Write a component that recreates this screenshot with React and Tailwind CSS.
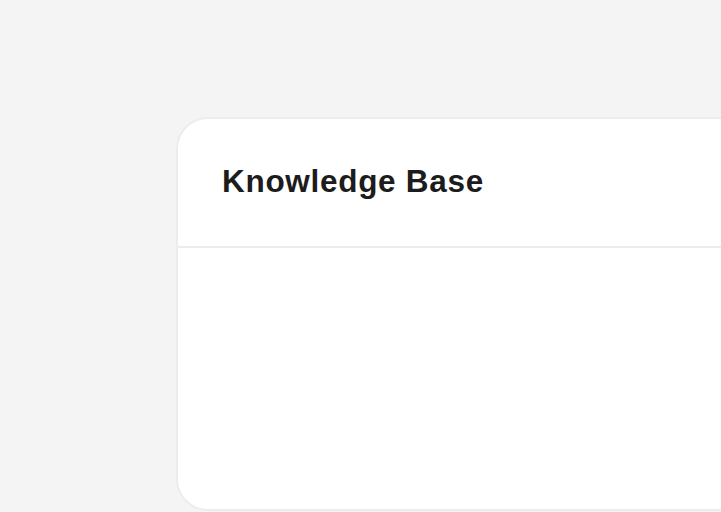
import React from "react";

export default function App() {
  return (
    <div className="min-h-screen w-full overflow-hidden bg-[#f4f4f4] pt-[117px] pl-[176px]" style={{ fontFamily: "'Liberation Sans', Arial, sans-serif" }}>
      <div className="w-[640px] h-[394px] bg-white rounded-[32px] border-2 border-[#ececec] flex flex-col">
        <div className="h-[129px] flex items-center pl-[44px] border-b-2 border-[#ececec]">
          <h1 className="text-[31.5px] font-bold text-[#1c1c1c] tracking-[0.7px] leading-none pb-[2px]">Knowledge Base</h1>
        </div>
        <div className="flex-1" />
      </div>
    </div>
  );
}
